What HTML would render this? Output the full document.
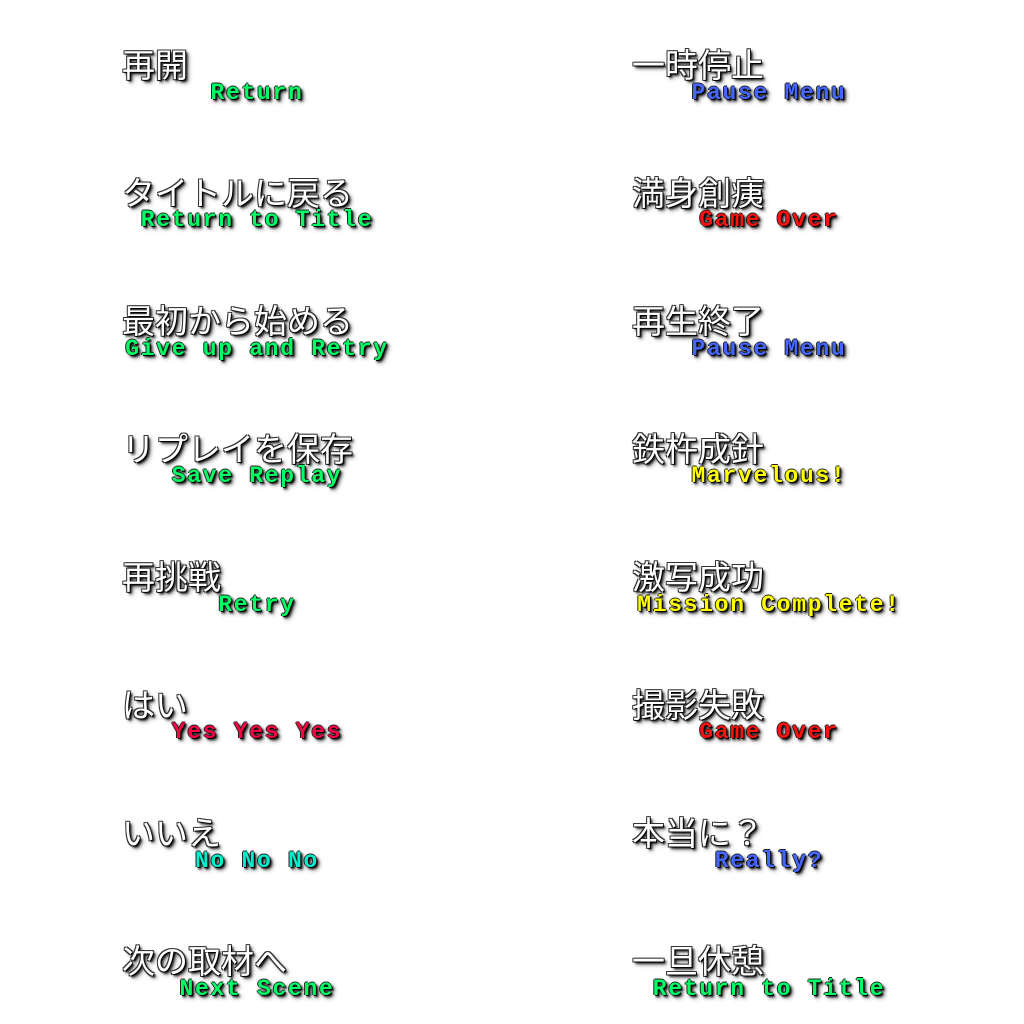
<!DOCTYPE html>
<html><head><meta charset="utf-8"><style>
html,body{margin:0;padding:0;background:#fff;width:1024px;height:1024px;overflow:hidden;position:relative}
.j{position:absolute;font-family:"Liberation Sans","Noto Sans CJK JP",sans-serif;font-size:33px;line-height:33px;color:#fff;white-space:nowrap;margin-top:2px;
text-shadow:1px 1px 0 #000,-1px -1px 0 #333,1px -1px 0 #333,-1px 1px 0 #333,2px 2px 2px #000,3px 3px 4px rgba(0,0,0,.6)}
.e{position:absolute;width:400px;text-align:center;font-family:"Liberation Mono",monospace;font-weight:bold;font-size:23px;letter-spacing:1.7px;line-height:22px;white-space:nowrap;
text-shadow:1px 1px 0 #000,-1px 0 0 #222,0 -1px 0 #222,2px 2px 2px #000,3px 3px 4px rgba(0,0,0,.6)}
.g{color:#00ff66}.b{color:#4466ff}.r{color:#ff1010}.y{color:#ffff00}.p{color:#ff0044}.c{color:#00eecc}
</style></head><body>
<div class="j" style="left:122px;top:47px">再開</div><div class="e g" style="left:57px;top:82px">Return</div>
<div class="j" style="left:122px;top:175px">タイトルに戻る</div><div class="e g" style="left:57px;top:209px">Return to Title</div>
<div class="j" style="left:122px;top:303px">最初から始める</div><div class="e g" style="left:57px;top:338px">Give up and Retry</div>
<div class="j" style="left:122px;top:431px">リプレイを保存</div><div class="e g" style="left:57px;top:465px">Save Replay</div>
<div class="j" style="left:122px;top:559px">再挑戦</div><div class="e g" style="left:57px;top:594px">Retry</div>
<div class="j" style="left:122px;top:687px">はい</div><div class="e p" style="left:57px;top:721px">Yes Yes Yes</div>
<div class="j" style="left:122px;top:815px">いいえ</div><div class="e c" style="left:57px;top:850px">No No No</div>
<div class="j" style="left:122px;top:943px">次の取材へ</div><div class="e g" style="left:57px;top:978px">Next Scene</div>

<div class="j" style="left:632px;top:47px">一時停止</div><div class="e b" style="left:569px;top:82px">Pause Menu</div>
<div class="j" style="left:632px;top:175px">満身創痍</div><div class="e r" style="left:569px;top:209px">Game Over</div>
<div class="j" style="left:632px;top:303px">再生終了</div><div class="e b" style="left:569px;top:338px">Pause Menu</div>
<div class="j" style="left:632px;top:431px">鉄杵成針</div><div class="e y" style="left:569px;top:465px">Marvelous!</div>
<div class="j" style="left:632px;top:559px">激写成功</div><div class="e y" style="left:569px;top:594px">Mission Complete!</div>
<div class="j" style="left:632px;top:687px">撮影失敗</div><div class="e r" style="left:569px;top:721px">Game Over</div>
<div class="j" style="left:632px;top:815px">本当に？</div><div class="e b" style="left:569px;top:850px">Really?</div>
<div class="j" style="left:632px;top:943px">一旦休憩</div><div class="e g" style="left:569px;top:978px">Return to Title</div>
</body></html>
